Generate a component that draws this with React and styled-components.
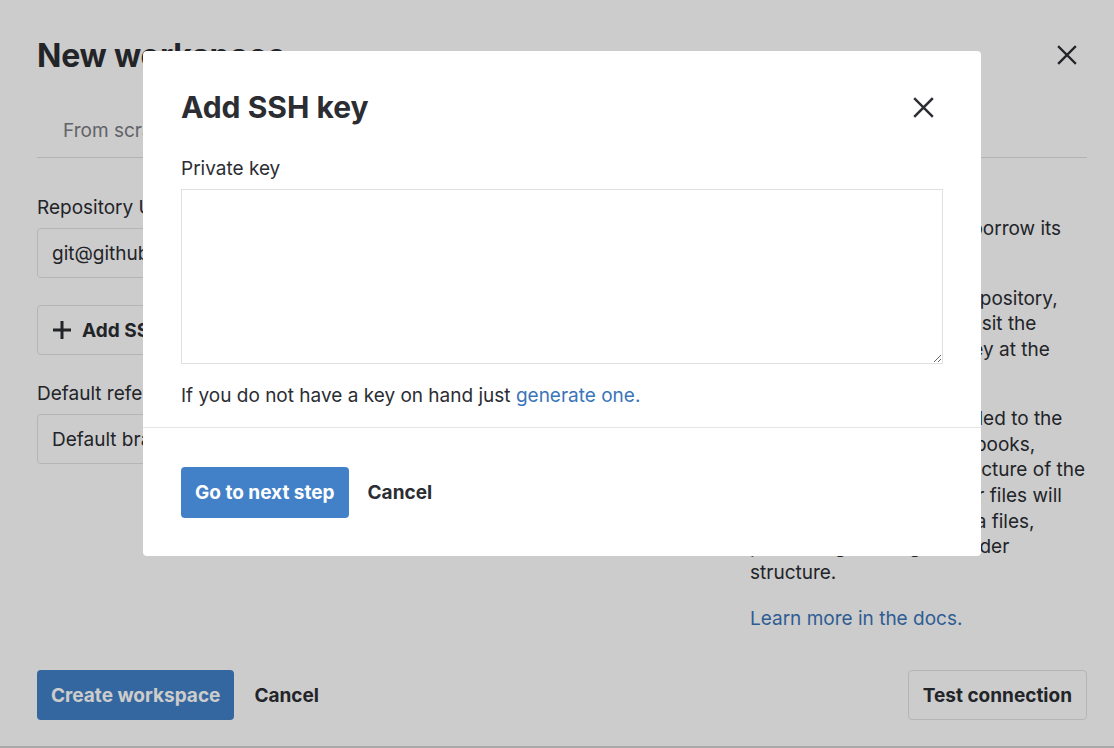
import styled, { createGlobalStyle } from "styled-components";

const GlobalStyle = createGlobalStyle`
  html, body {
    margin: 0;
    padding: 0;
    background: #a9a9a9;
    font-family: Inter, "Noto Sans", "Liberation Sans", sans-serif;
    color: #2b2d33;
  }
  * { box-sizing: border-box; }
`;

const Page = styled.div`
  position: relative;
  width: 1114px;
  height: 746px;
  background: #ffffff;
  padding: 32px 27px 26px 37px;
  display: flex;
  flex-direction: column;
`;

const Header = styled.div`
  display: flex;
  align-items: center;
  justify-content: space-between;
  height: 46px;
`;

const PageTitle = styled.h1`
  margin: 0;
  font-size: 32px;
  font-weight: 700;
  letter-spacing: -0.2px;
`;

const IconButton = styled.button`
  border: none;
  background: none;
  padding: 0;
  margin-right: ${(p) => p.$right || 0}px;
  width: 30px;
  height: 30px;
  display: flex;
  align-items: center;
  justify-content: center;
  color: #2b2d33;
  cursor: pointer;
`;

const Tabs = styled.div`
  display: flex;
  margin-top: 26px;
  border-bottom: 1px solid #e0e0e0;
`;

const Tab = styled.div`
  padding: 15px 25px 13px 26px;
  font-size: 19px;
  line-height: 24px;
  color: ${(p) => (p.$active ? "#2b2d33" : "#7a7c82")};
  border-bottom: 2px solid ${(p) => (p.$active ? "#4281c7" : "transparent")};
  margin-bottom: -1px;
`;

const Body = styled.div`
  flex: 1;
  display: grid;
  grid-template-columns: 1fr 337px;
  column-gap: 50px;
`;

const Form = styled.div`
  display: flex;
  flex-direction: column;
  padding-top: 38px;
`;

const Label = styled.label`
  display: block;
  font-size: 19px;
  line-height: 24px;
  margin-bottom: 8px;
`;

const Input = styled.div`
  height: 50px;
  border: 1px solid #e3e3e3;
  border-radius: 4px;
  padding: 0 14px;
  display: flex;
  align-items: center;
  font-size: 19px;
  margin-bottom: ${(p) => p.$gap || 0}px;
`;

const OutlineButton = styled.button`
  height: 50px;
  border: 1px solid #e3e3e3;
  border-radius: 4px;
  background: #ffffff;
  padding: 0 14px;
  display: inline-flex;
  align-items: center;
  gap: 10px;
  font-family: inherit;
  font-size: 19px;
  font-weight: 700;
  color: #2b2d33;
  align-self: ${(p) => p.$align || "auto"};
  margin-bottom: ${(p) => p.$gap || 0}px;
`;

const Aside = styled.div`
  font-size: 19px;
  line-height: 25.6px;
  padding-top: 32px;
  white-space: nowrap;
`;

const Para = styled.p`
  margin: 0 0 ${(p) => p.$gap || 18}px;
`;

const Link = styled.a`
  color: #3a75ba;
  text-decoration: none;
`;

const Footer = styled.div`
  display: flex;
  align-items: center;
  gap: 20px;
`;

const Spacer = styled.div`
  flex: 1;
`;

const PrimaryButton = styled.button`
  height: ${(p) => p.$h || 50}px;
  padding: 0 14px;
  border: none;
  border-radius: 4px;
  background: #4281c7;
  color: #ffffff;
  font-family: inherit;
  font-size: 19px;
  font-weight: 700;
`;

const TextButton = styled.button`
  border: none;
  background: none;
  padding: 0;
  font-family: inherit;
  font-size: 19px;
  font-weight: 700;
  color: #2b2d33;
`;

const Overlay = styled.div`
  position: absolute;
  inset: 0;
  background: rgba(0, 0, 0, 0.2);
  display: flex;
  justify-content: center;
  align-items: flex-start;
  padding: 51px 0 0 10px;
`;

const Modal = styled.div`
  width: 838px;
  background: #ffffff;
  border-radius: 4px;
`;

const ModalHeader = styled.div`
  display: flex;
  align-items: center;
  justify-content: space-between;
  padding: 39px 43px 0 38px;
`;

const ModalTitle = styled.h2`
  margin: 0;
  font-size: 30px;
  line-height: 34px;
  font-weight: 700;
`;

const ModalBody = styled.div`
  padding: 33px 38px 19px;
  border-bottom: 1px solid #e6e6e6;
`;

const TextArea = styled.textarea`
  display: block;
  width: 100%;
  height: 175px;
  border: 1px solid #e0e0e0;
  border-radius: 0;
  margin: 0 0 20px;
  font-family: inherit;
  font-size: 19px;
  resize: vertical;
  outline: none;
`;

const Hint = styled.p`
  margin: 0;
  font-size: 19px;
  line-height: 24px;
`;

const ModalFooter = styled.div`
  display: flex;
  align-items: center;
  gap: 19px;
  padding: 39px 38px 38px;
`;

const CloseIcon = ({ size = 20 }) => (
  <svg width={size} height={size} viewBox="0 0 20 20" fill="none">
    <path d="M2 2 L18 18 M18 2 L2 18" stroke="currentColor" strokeWidth="2.4" strokeLinecap="square" />
  </svg>
);

const PlusIcon = () => (
  <svg width="20" height="20" viewBox="0 0 20 20" fill="none">
    <path d="M10 1 V19 M1 10 H19" stroke="currentColor" strokeWidth="3" />
  </svg>
);

export default function App() {
  return (
    <>
      <GlobalStyle />
      <Page>
        <Header>
          <PageTitle>New workspace</PageTitle>
          <IconButton $right={5}>
            <CloseIcon />
          </IconButton>
        </Header>
        <Tabs>
          <Tab>From scratch</Tab>
          <Tab $active>From Git repository</Tab>
        </Tabs>
        <Body>
          <Form>
            <Label>Repository URL</Label>
            <Input $gap={27}>git@github.com:company/analytics.git</Input>
            <OutlineButton $align="flex-start" $gap={27}>
              <PlusIcon />
              Add SSH key
            </OutlineButton>
            <Label>Default reference</Label>
            <Input>Default branch</Input>
          </Form>
          <Aside>
            <Para $gap={19}>
              Clone an existing
              <br />
              Git repository, and it will borrow its
              <br />
              name and settings.
            </Para>
            <Para>
              To connect to a private repository,
              <br />
              add an SSH key and deposit the
              <br />
              a corresponding public key at the
              <br />
              Git provider.
            </Para>
            <Para $gap={21}>
              The repository will be added to the
              <br />
              workspace. Existing notebooks,
              <br />
              will then replicate the structure of the
              <br />
              repository, while the other files will
              <br />
              be situated alongside data files,
              <br />
              preserving the original folder
              <br />
              structure.
            </Para>
            <Para>
              <Link href="#">Learn more in the docs.</Link>
            </Para>
          </Aside>
        </Body>
        <Footer>
          <PrimaryButton>Create workspace</PrimaryButton>
          <TextButton>Cancel</TextButton>
          <Spacer />
          <OutlineButton>Test connection</OutlineButton>
        </Footer>
        <Overlay>
          <Modal>
            <ModalHeader>
              <ModalTitle>Add SSH key</ModalTitle>
              <IconButton>
                <CloseIcon size={21} />
              </IconButton>
            </ModalHeader>
            <ModalBody>
              <Label>Private key</Label>
              <TextArea />
              <Hint>
                If you do not have a key on hand just <Link href="#">generate one.</Link>
              </Hint>
            </ModalBody>
            <ModalFooter>
              <PrimaryButton $h={51}>Go to next step</PrimaryButton>
              <TextButton>Cancel</TextButton>
            </ModalFooter>
          </Modal>
        </Overlay>
      </Page>
    </>
  );
}
